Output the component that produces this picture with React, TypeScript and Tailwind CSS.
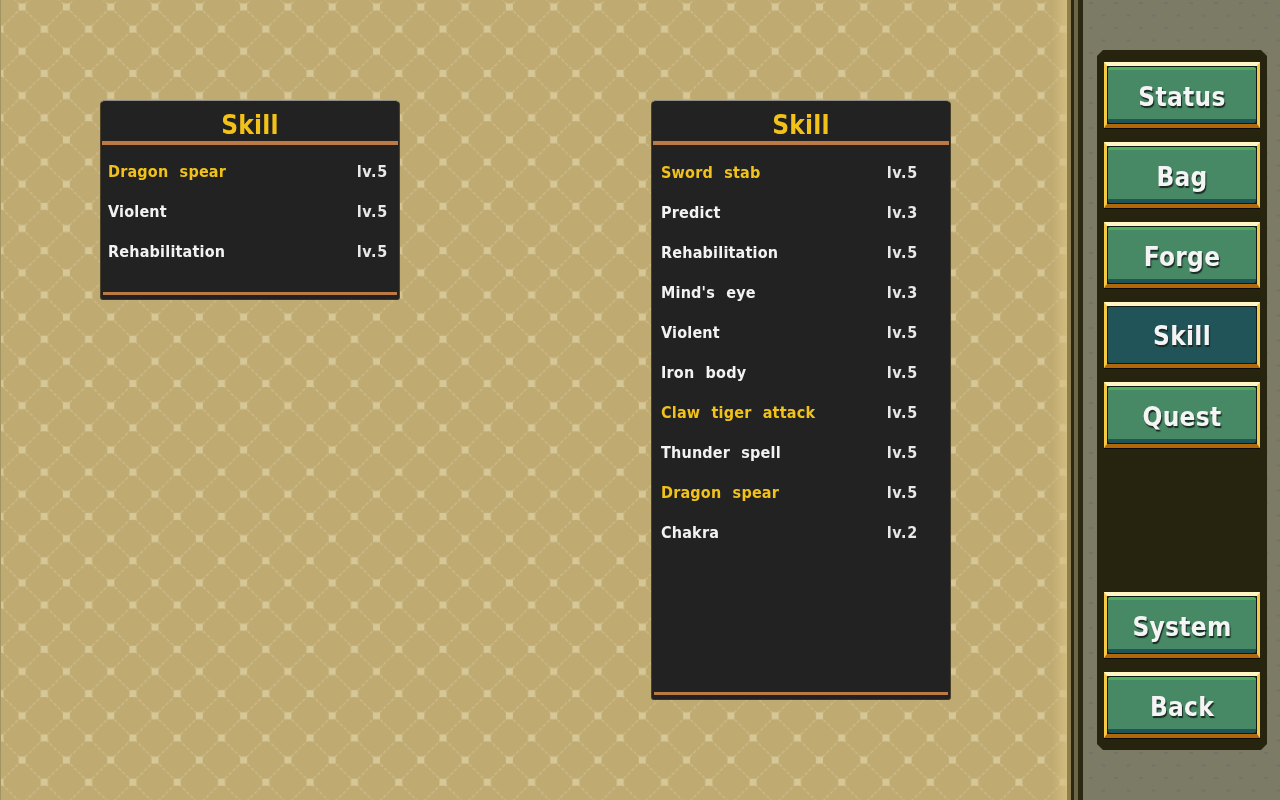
const leftSkills = [
  { name: "Dragon spear", level: "lv.5", gold: true },
  { name: "Violent", level: "lv.5" },
  { name: "Rehabilitation", level: "lv.5" },
];

const rightSkills = [
  { name: "Sword stab", level: "lv.5", gold: true },
  { name: "Predict", level: "lv.3" },
  { name: "Rehabilitation", level: "lv.5" },
  { name: "Mind's eye", level: "lv.3" },
  { name: "Violent", level: "lv.5" },
  { name: "Iron body", level: "lv.5" },
  { name: "Claw tiger attack", level: "lv.5", gold: true },
  { name: "Thunder spell", level: "lv.5" },
  { name: "Dragon spear", level: "lv.5", gold: true },
  { name: "Chakra", level: "lv.2" },
];

type Skill = { name: string; level: string; gold?: boolean };

function SkillPanel({ skills, className, rowsClass, rowClass }: { skills: Skill[]; className: string; rowsClass: string; rowClass: string }) {
  return (
    <div className={"flex flex-col rounded-t-[5px] rounded-b-[3px] border-x border-x-[#4a4128] border-t border-t-[#8f8f86] border-b border-b-[#3a3520] bg-[#222222] " + className}>
      <div className="flex h-[40px] items-center justify-center pt-[9px] text-[26px] font-bold tracking-[0.2px] text-[#f3c21a] blur-[0.3px]">Skill</div>
      <div className="mx-[1px] h-[4px] bg-[#bd7a45]" />
      <div className={"flex flex-1 flex-col blur-[0.3px] " + rowsClass}>
        {skills.map((s) => (
          <div key={s.name} className={"flex h-[40px] items-center justify-between text-[16px] font-bold " + rowClass + (s.gold ? " text-[#f1c21b]" : " text-[#f2f2f2]")}>
            <span className="tracking-[0.2px] [word-spacing:6px]">{s.name}</span>
            <span className="tracking-[0.7px] text-[#e8e8e8]">{s.level}</span>
          </div>
        ))}
      </div>
      <div className="mx-[2px] mb-[4px] h-[3px] bg-[#bd7a45]" />
    </div>
  );
}

function MenuButton({ label, active }: { label: string; active?: boolean }) {
  return (
    <div className="h-[67px] w-[156px] bg-[#0b0b04] pb-[1px]">
      <div className="h-full border-t-[4px] border-b-[4px] border-x-[3px] border-t-[#fff6c4] border-b-[#b2660a] border-x-[#f6c945] bg-[#0f1a18] p-[1px]">
        <div
          className={
            "flex h-full items-center justify-center rounded-[2px] text-[26px] font-bold tracking-[0.3px] text-[#f4f4f4] [text-shadow:1px_2px_1px_#1a2a24] " +
            (active ? "bg-[#215459] pt-[3px]" : "border-t-[3px] border-b-[4px] border-t-[#4cae5a] border-b-[#1f5458] bg-[#468964] pt-[5px]")
          }
        >
          <span className="blur-[0.3px]">{label}</span>
        </div>
      </div>
    </div>
  );
}

export default function App() {
  return (
    <div className="relative flex h-[800px] w-[1280px] overflow-hidden bg-[#bfaa72] font-['DejaVu_Sans_Condensed','DejaVu_Sans',sans-serif]">
      <svg className="absolute left-0 top-0" width="1067" height="800">
        <defs>
          <pattern id="quilt" x="0" y="7" width="44.3" height="44.3" patternUnits="userSpaceOnUse">
            <path d="M22.15 0L44.3 22.15L22.15 44.3L0 22.15Z" fill="none" stroke="#cdbb87" strokeWidth="1.3" strokeDasharray="3.5 2" />
            <rect x="18.6" y="-3.5" width="7" height="7" fill="#d6c797" />
            <rect x="18.6" y="40.8" width="7" height="7" fill="#d6c797" />
            <rect x="-3.5" y="18.6" width="7" height="7" fill="#d6c797" />
            <rect x="40.8" y="18.6" width="7" height="7" fill="#d6c797" />
          </pattern>
          <linearGradient id="edge" x1="0" x2="1" y1="0" y2="0">
            <stop offset="0" stopColor="#d8c080" stopOpacity="0" />
            <stop offset="1" stopColor="#d8c080" stopOpacity="0.8" />
          </linearGradient>
        </defs>
        <rect width="1067" height="800" fill="url(#quilt)" />
        <rect x="0" width="1" height="800" fill="#a09560" />
        <rect x="1052" width="15" height="800" fill="url(#edge)" />
      </svg>

      <div className="relative flex w-[1067px] items-start pl-[100px] pt-[100px]">
        <SkillPanel skills={leftSkills} className="h-[200px] w-[300px]" rowsClass="pt-[7px]" rowClass="pl-[7px] pr-[11px]" />
        <SkillPanel skills={rightSkills} className="ml-[251px] h-[600px] w-[300px]" rowsClass="pt-[8px]" rowClass="pl-[9px] pr-[32px]" />
      </div>

      <div className="relative flex flex-1">
        <div className="w-[4px] bg-[#8d7f50]" />
        <div className="w-[3px] bg-[#2b2912]" />
        <div className="w-[4px] bg-[#6e6546]" />
        <div className="w-[5px] bg-[#2b2912]" />
        <div className="relative flex flex-1 items-start bg-[#7c7b65] pl-[14px] pt-[50px]">
          <svg className="absolute left-0 top-0" width="197" height="800">
            <defs>
              <pattern id="dots" x="6" y="2" width="25" height="25" patternUnits="userSpaceOnUse">
                <rect x="0" y="0" width="4" height="2" fill="#77716a" />
                <rect x="12.5" y="12.5" width="4" height="2" fill="#77716a" />
              </pattern>
            </defs>
            <rect width="197" height="800" fill="url(#dots)" />
          </svg>
          <div className="relative flex h-[700px] w-[170px] flex-col items-center bg-[#26240f] pt-[12px] [clip-path:polygon(6px_0,164px_0,170px_6px,170px_694px,164px_700px,6px_700px,0_694px,0_6px)]">
            <div className="flex flex-col gap-[13px]">
              <MenuButton label="Status" />
              <MenuButton label="Bag" />
              <MenuButton label="Forge" />
              <MenuButton label="Skill" active />
              <MenuButton label="Quest" />
            </div>
            <div className="mt-[143px] flex flex-col gap-[13px]">
              <MenuButton label="System" />
              <MenuButton label="Back" />
            </div>
          </div>
        </div>
      </div>
    </div>
  );
}
